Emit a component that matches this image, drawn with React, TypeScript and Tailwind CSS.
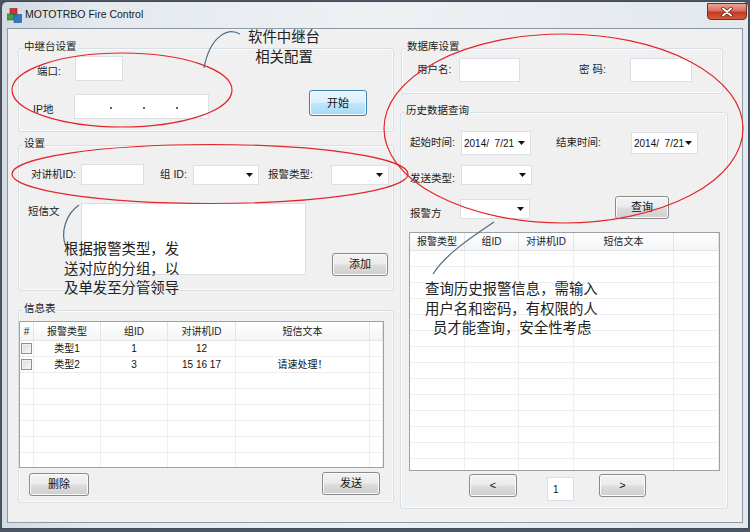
import React from "react";

const FONT = "font-['Liberation_Sans','Noto_Sans_CJK_SC',sans-serif]";
const NOTE = "font-['Noto_Sans_CJK_SC','Noto_Sans_CJK_JP',sans-serif]";

type Kids = { className?: string; children?: React.ReactNode };

function Tri() {
  return (
    <svg width="7" height="4" viewBox="0 0 7 4" className="shrink-0">
      <polygon points="0,0 7,0 3.5,4" fill="#111" />
    </svg>
  );
}

function Box({ className = "", children }: Kids) {
  return <div className={`shrink-0 border border-[#dcdfe4] bg-white ${className}`}>{children}</div>;
}

function Combo({ className = "", text }: { className?: string; text?: string }) {
  return (
    <div
      className={`flex shrink-0 items-center justify-between whitespace-pre border border-[#dcdfe4] bg-white pl-[2px] pr-[5px] text-[10px] text-[#111] ${className}`}
    >
      <span>{text}</span>
      <Tri />
    </div>
  );
}

function Label({ className = "", children }: Kids) {
  return <span className={`shrink-0 text-[10.5px] text-[#1b1b1b] ${className}`}>{children}</span>;
}

function Btn({ className = "", children, blue }: Kids & { blue?: boolean }) {
  const skin = blue
    ? "border-[#3c7fb1] bg-[linear-gradient(#eaf6fd_0%,#d9f0fc_48%,#bee6fd_52%,#a7d9f5_100%)]"
    : "border-[#8a8a8a] bg-[linear-gradient(#f3f3f3_0%,#ebebeb_48%,#dddddd_52%,#cfcfcf_100%)]";
  return (
    <div
      className={`flex shrink-0 items-center justify-center rounded-[3px] border text-[11px] text-[#111] shadow-[inset_0_0_0_1px_#fbfbfb] ${skin} ${className}`}
    >
      {children}
    </div>
  );
}

function Group({ title, className = "", children }: Kids & { title: string }) {
  return (
    <div className={`relative shrink-0 rounded-[3px] border border-[#d5dfe5] shadow-[inset_0_0_0_1px_#fafbfc] ${className}`}>
      <span className="absolute -top-[10px] left-[4px] bg-[#f0f0f0] px-[1px] text-[10.5px] leading-[14px] text-[#1b1b1b]">
        {title}
      </span>
      {children}
    </div>
  );
}

function Check() {
  return (
    <span className="block h-[11px] w-[11px] border border-[#8f8f8f] bg-[linear-gradient(135deg,#d8d8d8,#fbfbfb)] shadow-[inset_0_0_0_1px_#f2f2f2]" />
  );
}

function Grid({
  className = "",
  cols,
  head,
  data,
  rows,
  headH,
}: {
  className?: string;
  cols: string[];
  head: string[];
  data: React.ReactNode[][];
  rows: number;
  headH: string;
}) {
  return (
    <div className={`shrink-0 overflow-hidden border border-[#9da0a6] bg-white ${className}`}>
      <div className={`flex ${headH} border-b border-[#e2e3e5] bg-[linear-gradient(#ffffff,#f3f4f6)]`}>
        {cols.map((c, i) => (
          <div key={i} className={`${c} flex items-center justify-center border-r border-[#e3e4e6] text-[10px] text-[#1b1b1b]`}>
            {head[i]}
          </div>
        ))}
      </div>
      {Array.from({ length: rows }).map((_, r) => (
        <div key={r} className="flex h-[16px] border-b border-[#eeeeee]">
          {cols.map((c, i) => (
            <div key={i} className={`${c} flex items-center justify-center border-r border-[#eeeeee] text-[10px] text-[#111]`}>
              {data[r]?.[i]}
            </div>
          ))}
        </div>
      ))}
    </div>
  );
}

export default function App() {
  const leftCols = ["w-[14px] shrink-0", "w-[67px] shrink-0", "w-[67px] shrink-0", "w-[68px] shrink-0", "w-[134px] shrink-0", "flex-1"];
  const rightCols = ["w-[55px] shrink-0", "w-[54px] shrink-0", "w-[55px] shrink-0", "w-[100px] shrink-0", "flex-1"];
  const alarms = [
    [<Check key="c" />, "类型1", "1", "12", "", ""],
    [<Check key="c" />, "类型2", "3", "15 16 17", "请速处理！", ""],
  ];

  return (
    <div className={`relative h-[532px] w-[750px] overflow-hidden bg-[#4b5662] pt-[1px] pl-[1px] ${FONT}`}>
      {/* window */}
      <div className="flex h-[528px] w-[748px] flex-col rounded-t-[6px] border border-[#3b4d60] bg-[linear-gradient(to_right,#d3dae1,#e4e9ee_12%,#eef1f4_50%,#e3e8ed)]">
        {/* title bar */}
        <div className="flex h-[26px] shrink-0 items-center pl-[5px]">
          <svg width="15" height="15" viewBox="0 0 15 15" className="shrink-0">
            <rect x="3" y="0.5" width="7" height="6" fill="#d2332b" stroke="#8a1d18" strokeWidth="0.6" />
            <rect x="0.5" y="6" width="6" height="6" fill="#3da33b" stroke="#1d6a1c" strokeWidth="0.6" />
            <rect x="7" y="6.5" width="7.5" height="8" fill="#2f78c8" stroke="#1b4d86" strokeWidth="0.6" />
          </svg>
          <span className="ml-[3px] text-[10.5px] text-[#1a1a1a]">MOTOTRBO Fire Control</span>
          <div className="ml-auto mr-[1px] mt-[1px] flex h-[17px] w-[40px] self-start items-center justify-center rounded-b-[4px] border border-[#7b2a1f] bg-[linear-gradient(#eaa595_0%,#d8705c_45%,#c43a22_55%,#d45a3f_100%)]">
            <svg width="12" height="10" viewBox="0 0 12 10">
              <path d="M2 1.5 L10 8.5 M10 1.5 L2 8.5" stroke="#5a1a12" strokeWidth="3.4" strokeLinecap="round" />
              <path d="M2 1.5 L10 8.5 M10 1.5 L2 8.5" stroke="#ffffff" strokeWidth="2" strokeLinecap="round" />
            </svg>
          </div>
        </div>

        {/* client area */}
        <div className="ml-[5px] flex h-[495px] w-[736px] shrink-0 border border-[#8b99a8] bg-[#f0f0f0] pl-[10px] pt-[19px]">
          {/* left column */}
          <div className="flex w-[376px] shrink-0 flex-col">
            <Group title="中继台设置" className="h-[84px] w-[376px]">
              <div className="mt-[7px] flex items-center pl-[18px]">
                <Label className="w-[38px] pt-[6px]">端口:</Label>
                <Box className="h-[25px] w-[48px]" />
              </div>
              <div className="mt-[13px] flex items-start pl-[14px]">
                <Label className="h-[25px] w-[41px] leading-[31px]">IP地</Label>
                <Box className="flex h-[25px] w-[135px] items-center gap-[31px] pl-[35px] pt-[2px]">
                  <span className="h-[2px] w-[2px] bg-[#666]" />
                  <span className="h-[2px] w-[2px] bg-[#666]" />
                  <span className="h-[2px] w-[2px] bg-[#666]" />
                </Box>
                <Btn blue className="-mt-[4px] ml-[100px] h-[26px] w-[58px]">
                  开始
                </Btn>
              </div>
            </Group>

            <Group title="设置" className="mt-[13px] h-[146px] w-[376px]">
              <div className="mt-[18px] flex items-center pl-[12px]">
                <Label className="w-[50px]">对讲机ID:</Label>
                <Box className="h-[21px] w-[63px]" />
                <Label className="ml-[16px] w-[33px]">组 ID:</Label>
                <Combo className="h-[20px] w-[66px]" />
                <Label className="ml-[9px] w-[63px]">报警类型:</Label>
                <Combo className="h-[20px] w-[58px]" />
              </div>
              <div className="mt-[18px] flex items-start pl-[9px]">
                <Label className="w-[53px] pt-[1px]">短信文</Label>
                <Box className="h-[72px] w-[225px]" />
                <Btn className="ml-[26px] mt-[50px] h-[23px] w-[56px]">添加</Btn>
              </div>
            </Group>

            <Group title="信息表" className="mt-[19px] h-[193px] w-[376px]">
              <Grid
                className="mt-[10px] h-[147px] w-[365px]"
                headH="h-[19px]"
                cols={leftCols}
                head={["#", "报警类型", "组ID", "对讲机ID", "短信文本", ""]}
                data={alarms}
                rows={9}
              />
              <div className="mt-[5px] flex items-start pl-[10px] pr-[13px]">
                <Btn className="h-[23px] w-[60px]">删除</Btn>
                <Btn className="-mt-[1px] ml-auto h-[23px] w-[58px]">发送</Btn>
              </div>
            </Group>
          </div>

          {/* right column */}
          <div className="ml-[6px] flex w-[328px] shrink-0 flex-col">
            <Group title="数据库设置" className="ml-[1px] h-[46px] w-[322px]">
              <div className="mt-[8px] flex items-center pl-[15px]">
                <Label className="w-[42px]">用户名:</Label>
                <Box className="mt-[1px] h-[24px] w-[61px]" />
                <Label className="ml-[59px] w-[51px]">密 码:</Label>
                <Box className="h-[24px] w-[62px]" />
              </div>
            </Group>

            <Group title="历史数据查询" className="mt-[18px] h-[397px] w-[328px]">
              <div className="mt-[18px] flex h-[24px] items-start pl-[9px]">
                <Label className="w-[51px] pt-[4px]">起始时间:</Label>
                <Combo className="h-[24px] w-[70px]" text="2014/  7/21" />
                <Label className="ml-[25px] w-[75px] pt-[4px]">结束时间:</Label>
                <Combo className="mt-[1px] h-[22px] w-[67px]" text="2014/  7/21" />
              </div>
              <div className="mt-[10px] flex h-[20px] items-start pl-[9px]">
                <Label className="h-[20px] w-[51px] leading-[27px]">发送类型:</Label>
                <Combo className="h-[20px] w-[71px]" />
              </div>
              <div className="mt-[14px] flex h-[20px] items-start pl-[9px]">
                <Label className="h-[20px] w-[50px] leading-[28px]">报警方</Label>
                <Combo className="h-[20px] w-[70px]" />
                <Btn className="-mt-[3px] ml-[85px] h-[23px] w-[54px]">查询</Btn>
              </div>
              <Grid
                className="ml-[8px] mt-[13px] h-[239px] w-[311px]"
                headH="h-[18px]"
                cols={rightCols}
                head={["报警类型", "组ID", "对讲机ID", "短信文本", ""]}
                data={[]}
                rows={15}
              />
              <div className="mt-[3px] flex items-start pl-[68px]">
                <Btn className="h-[23px] w-[48px]">&lt;</Btn>
                <Box className="ml-[30px] mt-[3px] flex h-[24px] w-[27px] items-center pl-[5px] text-[10px] text-[#111]">1</Box>
                <Btn className="ml-[25px] h-[23px] w-[47px]">&gt;</Btn>
              </div>
            </Group>
          </div>
        </div>
      </div>

      {/* annotations drawn over the screenshot */}
      <svg className="pointer-events-none absolute left-0 top-0" width="750" height="532">
        <g fill="none" stroke="#e3262b" strokeWidth="1.2">
          <ellipse cx="122" cy="90" rx="110" ry="37" />
          <ellipse cx="210" cy="174" rx="198" ry="29.5" />
          <ellipse cx="563.5" cy="128.5" rx="179.5" ry="94.5" />
        </g>
        <g fill="none" stroke="#4f6a84" strokeWidth="1.2">
          <path d="M240 34 C228 27 210 36 204 68" />
          <path d="M79 205 C66 214 60 232 66 247" />
          <path d="M494 222 C470 238 445 255 433 274" />
        </g>
      </svg>
      <div className={`pointer-events-none absolute left-[240px] top-[26px] w-[88px] text-center text-[14.4px] leading-[19.5px] text-[#222] ${NOTE}`}>
        软件中继台
        <br />
        相关配置
      </div>
      <div className={`pointer-events-none absolute left-[64px] top-[238px] text-[14.4px] leading-[19.5px] text-[#222] ${NOTE}`}>
        根据报警类型，发
        <br />
        送对应的分组，以
        <br />
        及单发至分管领导
      </div>
      <div className={`pointer-events-none absolute left-[425px] top-[278px] text-[14.4px] leading-[19.5px] text-[#222] ${NOTE}`}>
        查询历史报警信息，需输入
        <br />
        用户名和密码，有权限的人
        <br />
        <span className="pl-[8px]">员才能查询，安全性考虑</span>
      </div>
    </div>
  );
}
